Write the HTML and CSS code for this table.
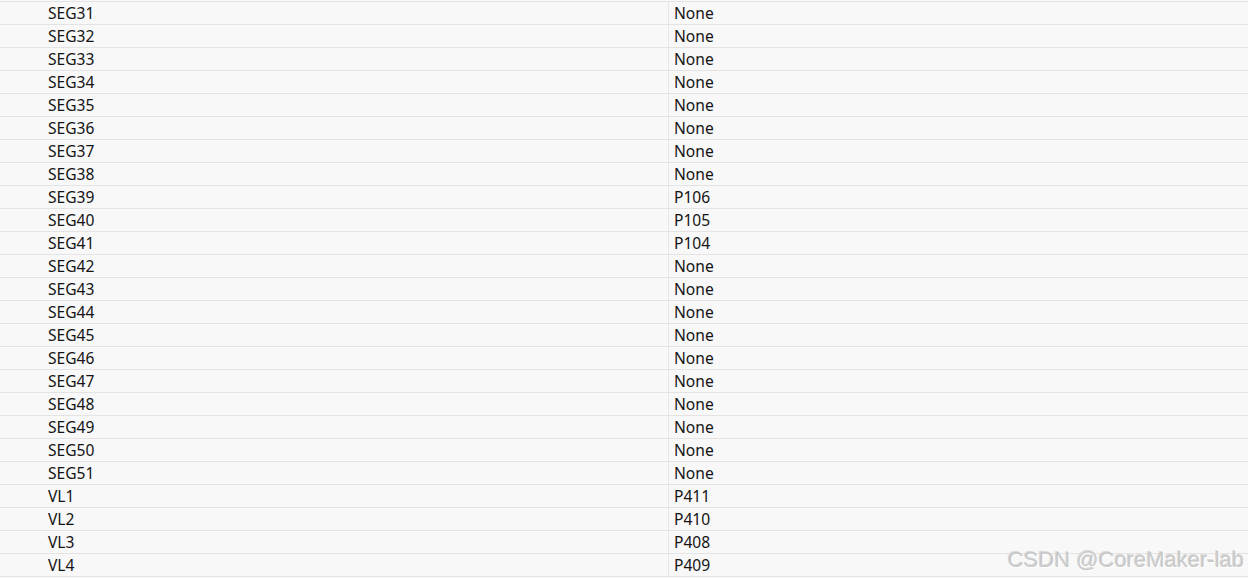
FILE: index.html
```html
<!DOCTYPE html>
<html>
<head>
  <title>Pins</title>
  <link rel="stylesheet" href="styles.css">
</head>
<body>

    <table class="pins">
        <tr><td>SEG31</td><td>None</td></tr>
        <tr><td>SEG32</td><td>None</td></tr>
        <tr><td>SEG33</td><td>None</td></tr>
        <tr><td>SEG34</td><td>None</td></tr>
        <tr><td>SEG35</td><td>None</td></tr>
        <tr><td>SEG36</td><td>None</td></tr>
        <tr><td>SEG37</td><td>None</td></tr>
        <tr><td>SEG38</td><td>None</td></tr>
        <tr><td>SEG39</td><td>P106</td></tr>
        <tr><td>SEG40</td><td>P105</td></tr>
        <tr><td>SEG41</td><td>P104</td></tr>
        <tr><td>SEG42</td><td>None</td></tr>
        <tr><td>SEG43</td><td>None</td></tr>
        <tr><td>SEG44</td><td>None</td></tr>
        <tr><td>SEG45</td><td>None</td></tr>
        <tr><td>SEG46</td><td>None</td></tr>
        <tr><td>SEG47</td><td>None</td></tr>
        <tr><td>SEG48</td><td>None</td></tr>
        <tr><td>SEG49</td><td>None</td></tr>
        <tr><td>SEG50</td><td>None</td></tr>
        <tr><td>SEG51</td><td>None</td></tr>
        <tr><td>VL1</td><td>P411</td></tr>
        <tr><td>VL2</td><td>P410</td></tr>
        <tr><td>VL3</td><td>P408</td></tr>
        <tr><td>VL4</td><td>P409</td></tr>
    </table>

    <div class="mark">CSDN @CoreMaker-lab</div>

</body>
</html>
```

FILE: styles.css
```css
body{
    margin: 0;
    padding-top: 1px;
    background: #f8f8f8;
    font-family: "Noto Sans", "Liberation Sans", sans-serif;
    overflow: hidden;
}

.pins{
    width: 100%;
    border-collapse: collapse;
    border-top: 1px solid #e4e4e4;
}

.pins td{
    height: 21px;
    padding: 1px 0 0;
    font-size: 15.6px;
    line-height: 21px;
    color: #141414;
    border-bottom: 1px solid #e4e4e4;
    vertical-align: middle;
}

.pins td:first-child{
    width: 620px;
    padding-left: 48px;
}

.pins td + td{
    padding-left: 5px;
    border-left: 1px solid #e8e8e8;
}

.mark{
    position: absolute;
    right: 4px;
    bottom: 5px;
    font-family: "Liberation Sans", sans-serif;
    font-size: 22px;
    color: #c9c9c9;
    text-shadow: 1px 1px 0 #ffffff, -1px -1px 0 #d8d8d8;
}
```
